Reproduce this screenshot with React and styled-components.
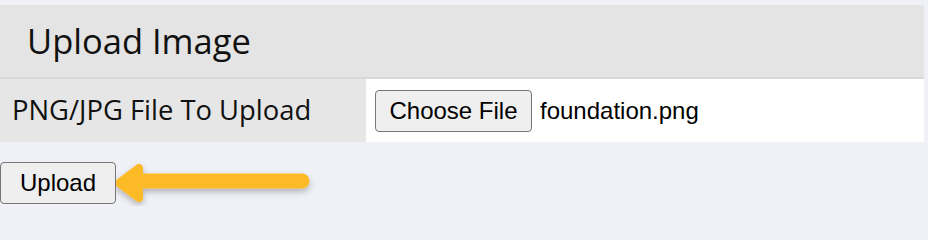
import styled, { createGlobalStyle } from "styled-components";

const GlobalStyle = createGlobalStyle`
    html, body {
        margin: 0;
        padding: 0;
        background-color: #f0f1f7;
    }
`

const Page = styled.div`
    width: 928px;
    height: 206px;
    padding-top: 5px;
    box-sizing: border-box;
    display: flex;
    flex-direction: column;
`

const Table = styled.div`
    width: 924px;
    display: flex;
    flex-direction: column;
`

const Header = styled.div`
    height: 74px;
    box-sizing: border-box;
    background-color: #e4e4e4;
    border-bottom: 2px solid #d9d9d9;
    display: flex;
    align-items: center;
    padding-left: 27px;
    padding-bottom: 2px;
    font-family: "Open Sans", sans-serif;
    font-size: 34.5px;
    color: #111;
`

const Row = styled.div`
    height: 63px;
    display: grid;
    grid-template-columns: 366px 1fr;
`

const Label = styled.div`
    background-color: #e6e6e6;
    display: flex;
    align-items: center;
    padding-left: 12px;
    padding-bottom: 3px;
    font-family: "Open Sans", sans-serif;
    font-size: 27.4px;
    color: #111;
`

const Value = styled.div`
    background-color: #ffffff;
    display: flex;
    align-items: center;
    padding-left: 9px;
    gap: 8px;
`

const NativeButton = styled.button`
    font-family: "Liberation Sans", Arial, sans-serif;
    font-size: 24px;
    color: #000;
    background-color: #efefef;
    border: 1.5px solid #767676;
    border-radius: 4px;
    height: 42px;
    width: ${props => props.width}px;
    padding: 0;
    display: flex;
    align-items: center;
    justify-content: center;
    cursor: pointer;
`

const FileName = styled.span`
    font-family: "Liberation Sans", Arial, sans-serif;
    font-size: 24px;
    color: #000;
`

const Footer = styled.div`
    margin-top: 20px;
    display: flex;
    align-items: flex-start;
`

const Arrow = styled.svg`
    display: block;
    margin-top: -2px;
`

function ArrowMark() {
    return (
        <Arrow width="204" height="48" viewBox="0 0 204 48">
            <defs>
                <filter id="shadow" x="-10%" y="-40%" width="120%" height="200%">
                    <feDropShadow dx="0" dy="3" stdDeviation="3" floodColor="#000" floodOpacity="0.28" />
                </filter>
            </defs>
            <g filter="url(#shadow)" fill="#fcba28" stroke="#fcba28" strokeLinecap="round" strokeLinejoin="round">
                <line x1="20" y1="21" x2="186" y2="21" strokeWidth="15" />
                <polygon points="3,23 23,8 23,38" strokeWidth="8" />
            </g>
        </Arrow>
    )
}

export default function App() {
    return (
        <>
            <GlobalStyle />
            <Page>
                <Table>
                    <Header>Upload Image</Header>
                    <Row>
                        <Label>PNG/JPG File To Upload</Label>
                        <Value>
                            <NativeButton width={157}>Choose File</NativeButton>
                            <FileName>foundation.png</FileName>
                        </Value>
                    </Row>
                </Table>
                <Footer>
                    <NativeButton width={116}>Upload</NativeButton>
                    <ArrowMark />
                </Footer>
            </Page>
        </>
    )
}
